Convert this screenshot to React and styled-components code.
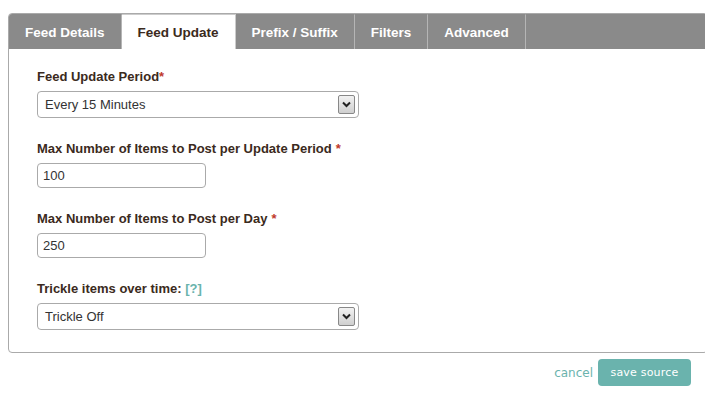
import React, { useState } from "react";
import styled, { createGlobalStyle } from "styled-components";

const GlobalStyle = createGlobalStyle`
  body {
    margin: 8px;
    background: #fff;
    font-family: "Liberation Sans", Arial, sans-serif;
  }
`;

const Panel = styled.div`
  width: 698px;
  margin-top: 5px;
  border: 1px solid #aaa;
  border-radius: 4px;
  overflow: hidden;
`;

const TabBar = styled.div`
  display: flex;
  height: 35px;
  background: #8a8a8a;
`;

const Tab = styled.div`
  display: flex;
  align-items: center;
  padding: 0 16px;
  font-size: 13.5px;
  font-weight: bold;
  cursor: pointer;
  color: ${(p) => (p.$active ? "#3b2a20" : "#fff")};
  background: ${(p) => (p.$active ? "#fff" : "transparent")};
  border-right: 1px solid ${(p) => (p.$active ? "#ccc" : "#b5b5b5")};
  border-top: 1px solid ${(p) => (p.$active ? "#ccc" : "transparent")};
`;

const Body = styled.div`
  padding: 20px 28px 22px;
  display: flex;
  flex-direction: column;
  gap: 23px;
`;

const Field = styled.div`
  display: flex;
  flex-direction: column;
  gap: 6px;
`;

const Label = styled.label`
  font-size: 13px;
  font-weight: bold;
  color: #3b2a20;
  line-height: 16px;
`;

const Req = styled.span`
  color: #c0392b;
  margin-left: ${(p) => (p.$gap ? "4px" : "0")};
`;

const Help = styled.a`
  color: #6ab3ad;
  text-decoration: none;
`;

const SelectBox = styled.div`
  box-sizing: border-box;
  width: 322px;
  height: 27px;
  border: 1px solid #aaa;
  border-radius: 4px;
  display: flex;
  align-items: center;
  justify-content: space-between;
  padding: 0 3px 0 7px;
  font-size: 13px;
  color: #333;
`;

const Arrow = styled.span`
  width: 15px;
  height: 17px;
  border: 1px solid #888;
  border-radius: 2px;
  background: linear-gradient(#f2f2f2, #cfcfcf);
  display: flex;
  align-items: center;
  justify-content: center;
`;

const Input = styled.input`
  width: 169px;
  height: 25px;
  box-sizing: border-box;
  border: 1px solid #aaa;
  border-radius: 4px;
  padding: 0 5px;
  font-family: "Liberation Sans", Arial, sans-serif;
  font-size: 13px;
  color: #333;
  outline: none;
`;

const Actions = styled.div`
  width: 683px;
  display: flex;
  justify-content: flex-end;
  align-items: center;
  gap: 5px;
  margin-top: 6px;
`;

const Cancel = styled.a`
  color: #6ab3ad;
  font-family: "DejaVu Sans", Verdana, sans-serif;
  font-size: 12px;
  text-decoration: none;
`;

const Save = styled.button`
  background: #6ab3ad;
  color: #fff;
  border: none;
  border-radius: 4px;
  height: 27px;
  width: 93px;
  font-family: "DejaVu Sans", Verdana, sans-serif;
  font-size: 11px;
  letter-spacing: 0.2px;
`;

function Select({ value }) {
  return (
    <SelectBox>
      <span>{value}</span>
      <Arrow>
        <svg width="9" height="7" viewBox="0 0 9 7">
          <path d="M1 1.5 L4.5 5 L8 1.5" fill="none" stroke="#222" strokeWidth="2" />
        </svg>
      </Arrow>
    </SelectBox>
  );
}

const tabs = ["Feed Details", "Feed Update", "Prefix / Suffix", "Filters", "Advanced"];

export default function App() {
  const [active, setActive] = useState(1);
  return (
    <>
      <GlobalStyle />
      <Panel>
        <TabBar>
          {tabs.map((t, i) => (
            <Tab key={t} $active={i === active} onClick={() => setActive(i)}>
              {t}
            </Tab>
          ))}
        </TabBar>
        <Body>
          <Field>
            <Label>
              Feed Update Period<Req>*</Req>
            </Label>
            <Select value="Every 15 Minutes" />
          </Field>
          <Field>
            <Label>
              Max Number of Items to Post per Update Period<Req $gap>*</Req>
            </Label>
            <Input defaultValue="100" />
          </Field>
          <Field>
            <Label>
              Max Number of Items to Post per Day<Req $gap>*</Req>
            </Label>
            <Input defaultValue="250" />
          </Field>
          <Field>
            <Label>
              Trickle items over time: <Help href="#">[?]</Help>
            </Label>
            <Select value="Trickle Off" />
          </Field>
        </Body>
      </Panel>
      <Actions>
        <Cancel href="#">cancel</Cancel>
        <Save>save source</Save>
      </Actions>
    </>
  );
}
